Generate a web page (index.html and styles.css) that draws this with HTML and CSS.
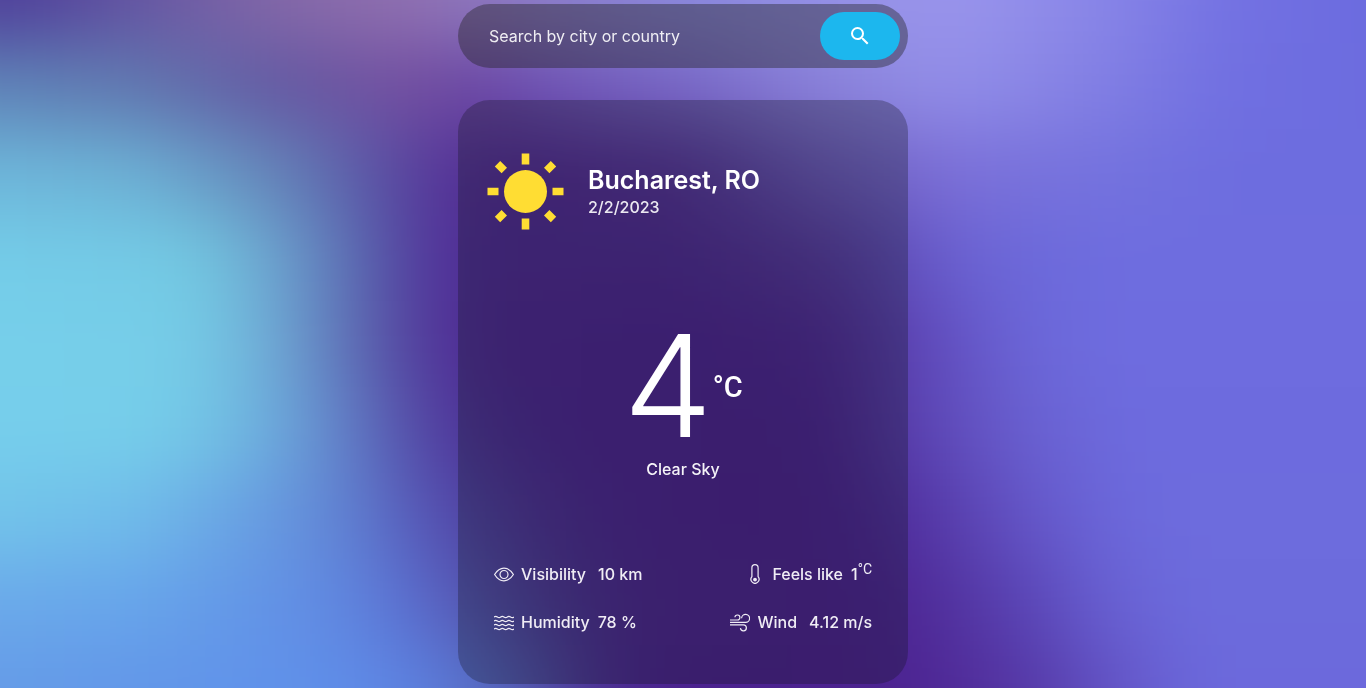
FILE: index.html
```html
<!DOCTYPE html>
<html lang="en">
<head>
<meta charset="utf-8">
<meta name="viewport" content="width=device-width, initial-scale=1">
<title>Weather</title>
<link rel="stylesheet" href="styles.css">
</head>
<body>
<div class="backdrop" aria-hidden="true">
  <div class="band band-1"></div><div class="band band-2"></div><div class="band band-3"></div>
  <div class="band band-4"></div><div class="band band-5"></div><div class="band band-6"></div>
  <div class="band band-7"></div><div class="band band-8"></div><div class="band band-9"></div>
</div>
<main class="app">
  <form class="search">
    <input class="search-input" type="text" placeholder="Search by city or country" aria-label="Search by city or country">
    <button class="search-button" type="submit" aria-label="Search">
      <svg width="24" height="24" viewBox="0 0 24 24" fill="#fff"><path d="M15.5 14h-.79l-.28-.27A6.471 6.471 0 0 0 16 9.5 6.5 6.5 0 1 0 9.5 16c1.61 0 3.09-.59 4.23-1.57l.27.28v.79l5 4.99L20.49 19l-4.99-5zm-6 0C7.01 14 5 11.99 5 9.5S7.01 5 9.5 5 14 7.01 14 9.5 11.99 14 9.5 14z"/></svg>
    </button>
  </form>
  <section class="card">
    <header class="place">
      <svg class="sun" viewBox="0 0 80 80" fill="#ffdd33">
        <circle cx="39.500" cy="39.500" r="21.500"/>
        <path d="M35.700 1.500h7.600v11h-7.600zM35.700 66.500h7.600v11h-7.600zM1.500 35.700h11v7.600h-11zM66.500 35.700h11v7.600h-11zM8.800 14.400l5.400-5.400 6.800 6.800-5.400 5.400zM58 15.800l6.800-6.800 5.400 5.400-6.800 6.800zM8.800 64.800l6.800-6.800 5.400 5.400-6.800 6.800zM58 63.400l5.400-5.400 6.800 6.800-5.400 5.400z"/>
      </svg>
      <div>
        <h1 class="city">Bucharest, RO</h1>
        <p class="date">2/2/2023</p>
      </div>
    </header>
    <div class="now">
      <div class="temp"><span class="degrees">4</span><span class="unit">°C</span></div>
      <p class="sky">Clear Sky</p>
    </div>
    <div class="details">
      <div class="column">
        <div class="item">
          <svg class="icon" viewBox="0 0 20 20"><path d="M.6 10.500C3 6.600 6.200 4.200 10 4.200s7 2.400 9.400 6.300c-2.400 3.900-5.600 6.300-9.400 6.300S3 14.400.6 10.500z"/><circle cx="10" cy="10.500" r="4"/></svg>
          <span>Visibility</span><span class="value wide">10 km</span>
        </div>
        <div class="item">
          <svg class="icon" viewBox="0 0 20 20"><path d="M0 5q1.700-1.300 3.400 0t3.300 0 3.300 0 3.300 0 3.300 0 3.400 0M0 9q1.700-1.300 3.400 0t3.300 0 3.300 0 3.300 0 3.300 0 3.400 0M0 13q1.700-1.300 3.400 0t3.300 0 3.300 0 3.300 0 3.300 0 3.400 0M0 17q1.700-1.300 3.400 0t3.300 0 3.300 0 3.300 0 3.300 0 3.400 0"/></svg>
          <span>Humidity</span><span class="value">78 %</span>
        </div>
      </div>
      <div class="column right">
        <div class="item">
          <svg class="icon" viewBox="0 0 20 20"><path d="M6.900 12.700V3.700a3.100 3.100 0 0 1 6.200 0v9a4 4 0 1 1-6.200 0z"/><circle class="solid" cx="10" cy="15.600" r="1.900"/></svg>
          <span>Feels like</span><span class="value">1<sup class="small-unit">°C</sup></span>
        </div>
        <div class="item">
          <svg class="icon" viewBox="0 0 20 20"><path d="M0 10.400h15.500a4 4 0 1 0-3.900-4.200M0 8h7.200a2.500 2.500 0 1 0-2.300-2.800M0 12.800h13.400a3 3 0 1 1-3 3.400"/></svg>
          <span>Wind</span><span class="value wide">4.12 m/s</span>
        </div>
      </div>
    </div>
  </section>
</main>
</body>
</html>
```
FILE: styles.css
```css
* { box-sizing: border-box; }
body {
  margin: 0;
  color: #fff;
  background: #6b6bdf;
  font-family: Inter, "Open Sans", sans-serif;
  font-size: 16px;
  line-height: 24px;
}
h1, p { margin: 0; }

.backdrop {
  position: fixed;
  inset: -129px -100px;
  z-index: -1;
  display: grid;
  grid-template-rows: 172px repeat(7, 1fr) 172px;
  filter: blur(34px);
}
.band-1 { background: linear-gradient(90deg, #50409a 8%, #6455a2 15%, #8468a8 24%, #9070b0 32%, #8c7cc6 40%, #8a88dc 50%, #9490e6 59%, #9a95ec 67%, #8a87e8 76%, #7371e2 85%, #6b6bdf 94%); }
.band-2 { background: linear-gradient(90deg, #5f84b8 6%, #6078b0 15%, #6358a2 24%, #7450a0 32%, #6a46a4 37%, #6f54b4 41%, #7868c6 50%, #8a82da 59%, #928ee8 67%, #8380e4 76%, #706fe1 85%, #6c6cdf 94%); }
.band-3 { background: linear-gradient(90deg, #6db6da 6%, #6cb0d4 15%, #6484b8 24%, #5c5eaa 29%, #583f9b 33%, #522c94 37%, #532b94 41%, #563499 50%, #6c5cbc 59%, #7c70d8 67%, #7573de 76%, #6d6ddf 85%); }
.band-4 { background: linear-gradient(90deg, #74cce8 6%, #74cae6 15%, #72c8e0 19%, #6ca2ce 24%, #5b6cb2 29%, #533c9c 33%, #4f2a94 37%, #4f2a94 50%, #573a9f 59%, #6150bc 64%, #6a60d0 67%, #6c69da 72%, #6e6ddf 78%); }
.band-5 { background: linear-gradient(90deg, #76cfea 6%, #76cee9 15%, #75cbe6 19%, #6ea8d4 24%, #5d6cb4 29%, #533e9c 33%, #4e2892 37%, #4d2391 50%, #4f2895 59%, #5a42b0 64%, #6350c2 67%, #6b67d8 72%, #6e6cdf 77%); }
.band-6 { background: linear-gradient(90deg, #76ceeb 6%, #76ceea 15%, #73c6e6 19%, #6caadc 24%, #5f78c4 29%, #5449a4 33%, #4d3096 37%, #4d2491 43%, #4c2390 59%, #573eaa 64%, #604cbc 67%, #6960d0 72%, #6d6bde 78%); }
.band-7 { background: linear-gradient(90deg, #72c4ea 6%, #70bcea 15%, #6698e0 24%, #5f7ed0 29%, #5658b8 33%, #5041a0 37%, #4d2a92 43%, #4c2290 50%, #4c2390 60%, #5030a0 64%, #583eac 67%, #6456c8 72%, #6c69dc 78%, #6d6cdd 82%); }
.band-8 { background: linear-gradient(90deg, #6baaea 6%, #67a5ea 15%, #6292e6 24%, #5f84de 29%, #5a6acc 33%, #5453ac 37%, #4e3c98 41%, #4c2890 46%, #4c2290 60%, #4d2694 64%, #52339f 67%, #5a45b6 72%, #6860d2 77%, #6c6bdc 82%); }
.band-9 { background: linear-gradient(90deg, #659ce8 6%, #6092ea 24%, #5f8ce8 29%, #5c80e0 33%, #5870c8 37%, #5152a8 41%, #4b2c90 45%, #4b218f 50%, #4c2390 64%, #502a98 67%, #5538a6 72%, #6252c4 77%, #6c69dc 83%); }

.app {
  min-height: 100vh;
  width: 100%;
  max-width: 450px;
  margin: 0 auto;
  display: flex;
  flex-direction: column;
  justify-content: center;
  gap: 32px;
}
.search {
  display: flex;
  gap: 8px;
  padding: 8px;
  border-radius: 32px;
  background: rgba(32, 32, 32, .4);
}
.search-input {
  flex: 1;
  min-width: 0;
  padding: 0 0 0 23px;
  border: 0;
  outline: 0;
  background: transparent;
  color: #fff;
  font: inherit;
}
.search-input::placeholder { color: #fff; opacity: .9; }
.search-button {
  display: flex;
  align-items: center;
  justify-content: center;
  width: 80px;
  height: 48px;
  border: 0;
  border-radius: 24px;
  background: #1cb7ee;
  cursor: pointer;
}

.card {
  display: flex;
  flex-direction: column;
  justify-content: space-between;
  min-height: 584px;
  padding: 52px 36px 50px;
  border-radius: 32px;
  background: rgba(20, 20, 32, .3);
}
.place {
  display: flex;
  align-items: center;
  gap: 22px;
  margin-left: -8px;
}
.sun { width: 80px; height: 80px; }
.city { font-size: 25px; line-height: 30px; font-weight: 600; }
.date { font-weight: 500; opacity: .9; }
.now { text-align: center; }
.temp {
  display: flex;
  align-items: center;
  justify-content: center;
}
.degrees { font-size: 142px; line-height: 144px; font-weight: 300; }
.unit {
  padding-top: 4px;
  font-family: Roboto, sans-serif;
  font-size: 29px;
  font-weight: 500;
}
.sky { font-weight: 500; opacity: .95; }

.details {
  display: flex;
  justify-content: space-between;
  font-weight: 500;
  color: #f0edf5;
}
.column { display: flex; flex-direction: column; gap: 24px; }
.right { align-items: flex-end; }
.item { display: flex; align-items: center; height: 24px; }
.icon {
  width: 20px;
  height: 20px;
  margin-right: 7px;
  fill: none;
  stroke: currentColor;
  stroke-width: 1.2;
}
.solid { fill: currentColor; stroke: none; }
.value { margin-left: 8px; }
.wide { margin-left: 12px; }
.small-unit {
  font-family: Roboto, sans-serif;
  font-size: 14px;
  line-height: 14px;
  font-weight: 400;
}
```
